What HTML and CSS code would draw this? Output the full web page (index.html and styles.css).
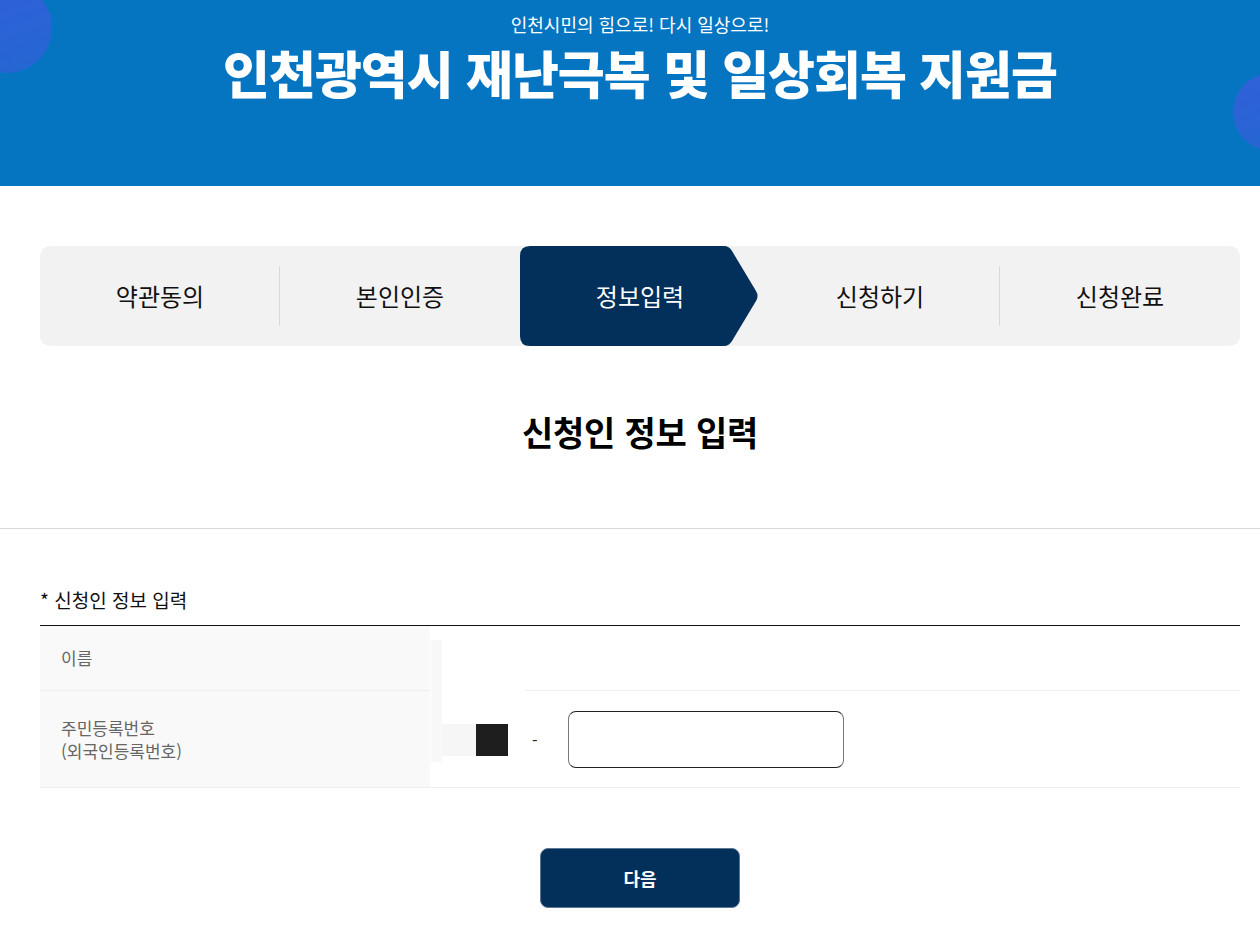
FILE: index.html
```html
<!DOCTYPE html>
<html lang="ko">
<head>
<meta charset="utf-8">
<title>인천광역시 재난극복 및 일상회복 지원금</title>
<link rel="stylesheet" href="styles.css">
</head>
<body>
<header class="hero">
  <span class="circle circle-left"></span>
  <span class="circle circle-right"></span>
  <p class="hero-sub">인천시민의 힘으로! 다시 일상으로!</p>
  <h1 class="hero-title">인천광역시 재난극복 및 일상회복 지원금</h1>
</header>

<main class="content">
  <ol class="steps">
    <li class="step">약관동의</li>
    <li class="step sep">본인인증</li>
    <li class="step active">
      <svg class="step-shape" viewBox="0 0 240 100" preserveAspectRatio="none" aria-hidden="true">
        <path d="M10 0 H204 Q209 0 212 5 L236 45 Q239 50 236 55 L212 95 Q209 100 204 100 H10 Q0 100 0 90 V10 Q0 0 10 0 Z" fill="#03305a"/>
      </svg>
      <span class="step-label">정보입력</span>
    </li>
    <li class="step">신청하기</li>
    <li class="step sep">신청완료</li>
  </ol>

  <h2 class="page-title">신청인 정보 입력</h2>
</main>

<hr class="divider">

<section class="form-area">
  <h3 class="form-title">* 신청인 정보 입력</h3>
  <div class="form-table">
    <span class="ghost-strip"></span>
    <div class="row row-name">
      <div class="label">이름</div>
      <div class="value value-name"><span class="name-gap"></span><span class="name-line"></span></div>
    </div>
    <div class="row row-rrn">
      <div class="label"><span class="label-lines">주민등록번호<br>(외국인등록번호)</span></div>
      <div class="value value-rrn">
        <span class="rrn-front"></span><span class="rrn-mask"></span>
        <span class="dash">-</span>
        <input class="rrn-back" type="text" aria-label="주민등록번호 뒷자리">
      </div>
    </div>
  </div>
  <div class="actions">
    <button class="btn-next" type="button">다음</button>
  </div>
</section>
</body>
</html>
```
FILE: styles.css
```css
* { box-sizing: border-box; }
html, body { margin: 0; padding: 0; }
body {
  font-family: "Noto Sans CJK KR", "Noto Sans", sans-serif;
  color: #111;
  background: #fff;
  width: 1260px;
}

.hero {
  position: relative;
  height: 186px;
  background: #0575c2;
  overflow: hidden;
  text-align: center;
  color: #fff;
  padding-top: 11px;
  padding-left: 20px;
}
.circle {
  position: absolute;
  border-radius: 50%;
  background: linear-gradient(160deg, #3160d9 0%, #2467d2 100%);
}
.circle-left { width: 90px; height: 90px; left: -38px; top: -17px; }
.circle-right { width: 78px; height: 78px; left: 1233px; top: 73px; }
.hero-sub {
  position: relative;
  margin: 0;
  font-size: 18px;
  line-height: 26px;
  font-weight: 400;
  letter-spacing: 0;
}
.hero-title {
  position: relative;
  margin: 0;
  font-size: 51px;
  line-height: 70px;
  font-weight: 900;
  letter-spacing: -1px;
}

.content { padding: 60px 20px 0 40px; }
.steps {
  list-style: none;
  margin: 0;
  padding: 0;
  display: grid;
  grid-template-columns: repeat(5, 240px);
  height: 100px;
  background: #f2f2f2;
  border-radius: 10px;
  width: 1200px;
}
.step {
  position: relative;
  display: flex;
  align-items: center;
  justify-content: center;
  font-size: 24px;
  color: #111;
  letter-spacing: 0;
  padding-bottom: 1px;
}
.step.sep::before {
  content: "";
  position: absolute;
  left: -1px;
  top: 20px;
  height: 60px;
  width: 1px;
  background: #d9d9d9;
}
.step.active { color: #fff; }
.step-shape {
  position: absolute;
  left: 0; top: 0;
  width: 240px; height: 100px;
}
.step-label { position: relative; }

.page-title {
  margin: 66px 0 0;
  text-align: center;
  font-size: 34px;
  line-height: 40px;
  font-weight: 700;
  color: #000;
  letter-spacing: -0.2px;
}

.divider {
  border: 0;
  height: 1px;
  background: #d9d9d9;
  margin: 76px 0 0;
}

.form-area { padding: 0 20px 0 40px; }
.form-title {
  margin: 58px 0 0;
  font-size: 19px;
  line-height: 26px;
  font-weight: 400;
  color: #111;
  padding-bottom: 12px;
  border-bottom: 1px solid #111;
  width: 1200px;
}
.form-table { position: relative; width: 1200px; }
.ghost-strip {
  position: absolute;
  left: 391px; top: 14px;
  width: 11px; height: 122px;
  background: #f8f8f8;
}
.row { display: flex; border-bottom: 1px solid #eee; }
.row-name { height: 65px; border-bottom: 0; }
.row-rrn { height: 97px; }
.label {
  width: 390px;
  background: #f9f9f9;
  color: #666;
  font-size: 17px;
  line-height: 22px;
  padding-left: 21px;
  display: flex;
  align-items: center;
  border-bottom: 1px solid #eee;
}
.label-lines { line-height: 23px; }
.row-rrn .label { border-bottom: 0; }
.value { flex: 1; display: flex; }
.value-name { align-items: flex-end; }
.name-gap { width: 95px; }
.name-line { flex: 1; height: 1px; background: #eee; }
.value-rrn { align-items: center; padding-top: 1px; }
.rrn-front { margin-left: 12px; width: 34px; height: 32px; background: #f6f6f6; }
.rrn-mask { width: 32px; height: 32px; background: #1e1e1e; }
.dash { margin-left: 24px; width: 36px; font-size: 16px; color: #222; }
.rrn-back {
  width: 276px;
  height: 57px;
  border: 1px solid #222;
  border-left-color: #777;
  border-right-color: #777;
  border-radius: 8px;
  background: #fff;
  font: inherit;
  padding: 0 12px;
}

.actions { display: flex; justify-content: center; margin-top: 60px; padding-bottom: 31px; }
.btn-next {
  width: 200px;
  height: 60px;
  border: 1px solid #5d7893;
  border-radius: 8px;
  background: #03305a;
  color: #fff;
  font-family: inherit;
  font-size: 18px;
  font-weight: 700;
}
```
